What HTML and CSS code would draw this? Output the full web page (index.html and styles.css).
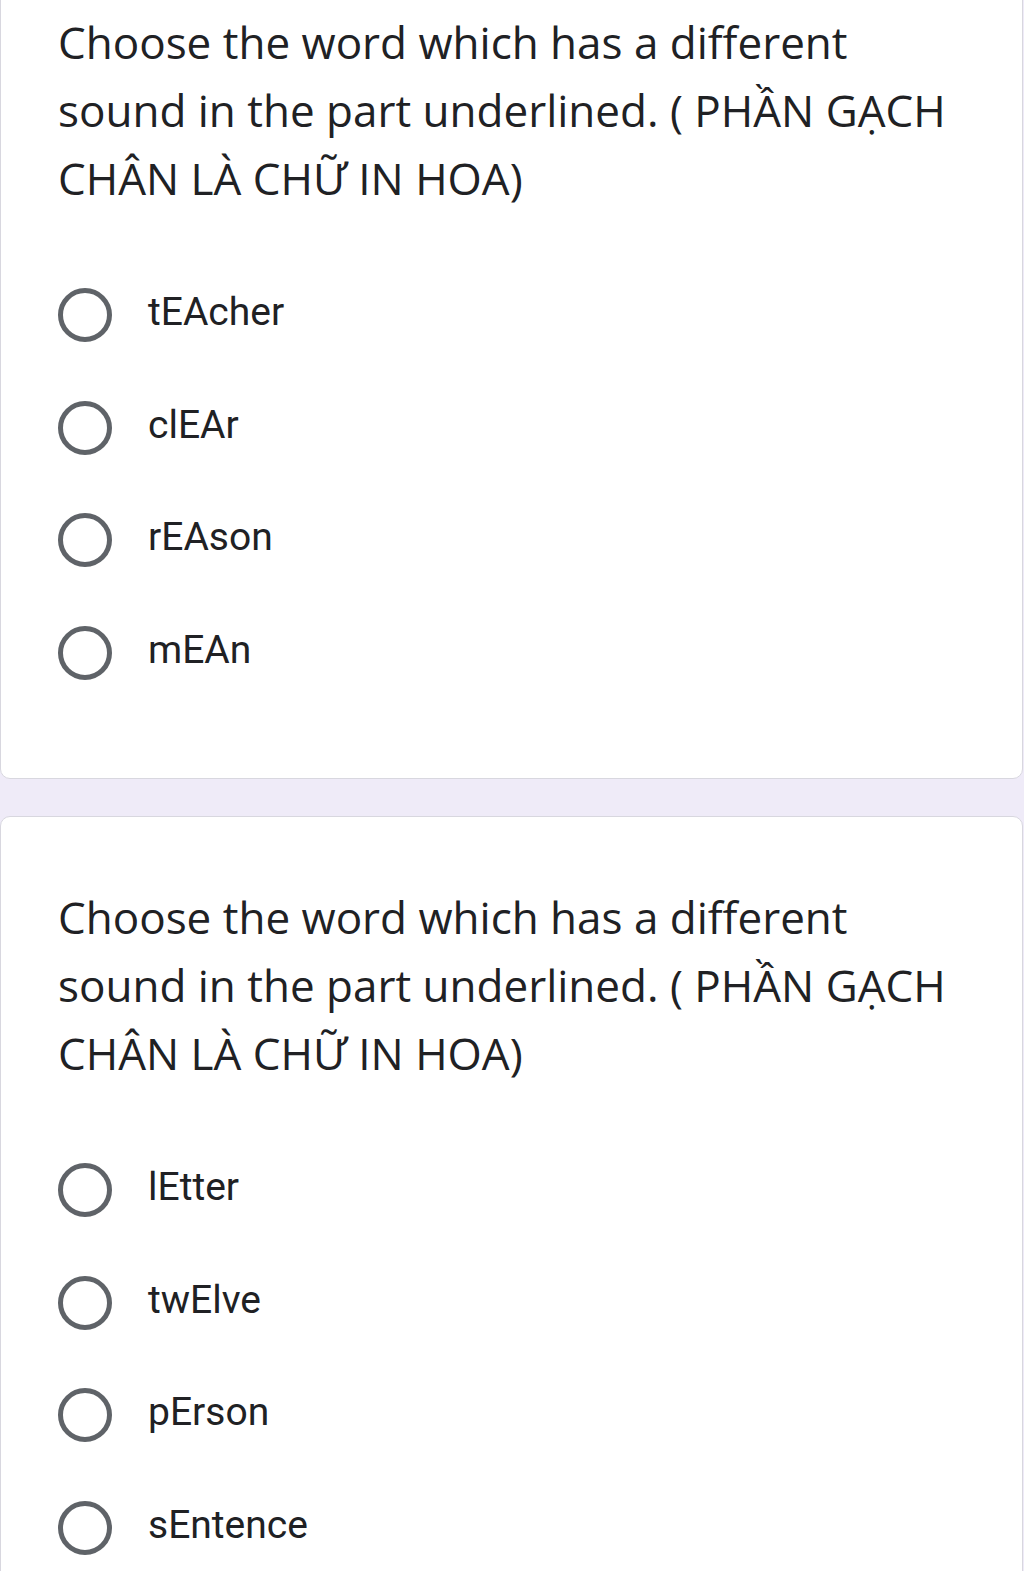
FILE: index.html
```html
<!DOCTYPE html>
<html lang="vi">
<head>
<meta charset="utf-8">
<title>Quiz</title>
<link rel="stylesheet" href="styles.css">
</head>
<body>
<div class="page">
  <section class="card card-first">
    <h2 class="question">Choose the word which has a different sound in the part underlined. ( PHẦN GẠCH CHÂN LÀ CHỮ IN HOA)</h2>
    <ul class="options">
      <li class="option"><span class="radio"></span><span class="label">tEAcher</span></li>
      <li class="option"><span class="radio"></span><span class="label">clEAr</span></li>
      <li class="option"><span class="radio"></span><span class="label">rEAson</span></li>
      <li class="option"><span class="radio"></span><span class="label">mEAn</span></li>
    </ul>
  </section>
  <section class="card">
    <h2 class="question">Choose the word which has a different sound in the part underlined. ( PHẦN GẠCH CHÂN LÀ CHỮ IN HOA)</h2>
    <ul class="options">
      <li class="option"><span class="radio"></span><span class="label">lEtter</span></li>
      <li class="option"><span class="radio"></span><span class="label">twElve</span></li>
      <li class="option"><span class="radio"></span><span class="label">pErson</span></li>
      <li class="option"><span class="radio"></span><span class="label">sEntence</span></li>
    </ul>
  </section>
</div>
</body>
</html>
```
FILE: styles.css
```css
html, body {
  margin: 0;
  padding: 0;
}
body {
  background: #efebf8;
  overflow: hidden;
}
.page {
  display: flex;
  flex-direction: column;
  gap: 37px;
  width: 1023px;
}
.card {
  background: #ffffff;
  border: 1px solid #d8d7df;
  border-radius: 10px;
  padding: 66px 40px 69px 57px;
}
.card-first {
  margin-top: -59px;
}
.question {
  margin: 0;
  max-width: 905px;
  font-family: "Open Sans", "Noto Sans", sans-serif;
  font-weight: 400;
  font-size: 44px;
  line-height: 68px;
  color: #202124;
  letter-spacing: 0;
}
.options {
  list-style: none;
  margin: 47px 0 0 0;
  padding: 0;
}
.option {
  display: flex;
  align-items: center;
  height: 112.5px;
}
.radio {
  box-sizing: border-box;
  width: 54px;
  height: 54px;
  border: 5px solid #5f6368;
  border-radius: 50%;
  flex: none;
}
.label {
  margin-left: 36px;
  margin-bottom: 6px;
  font-family: Roboto, "Liberation Sans", sans-serif;
  font-size: 39px;
  color: #202124;
}
```
